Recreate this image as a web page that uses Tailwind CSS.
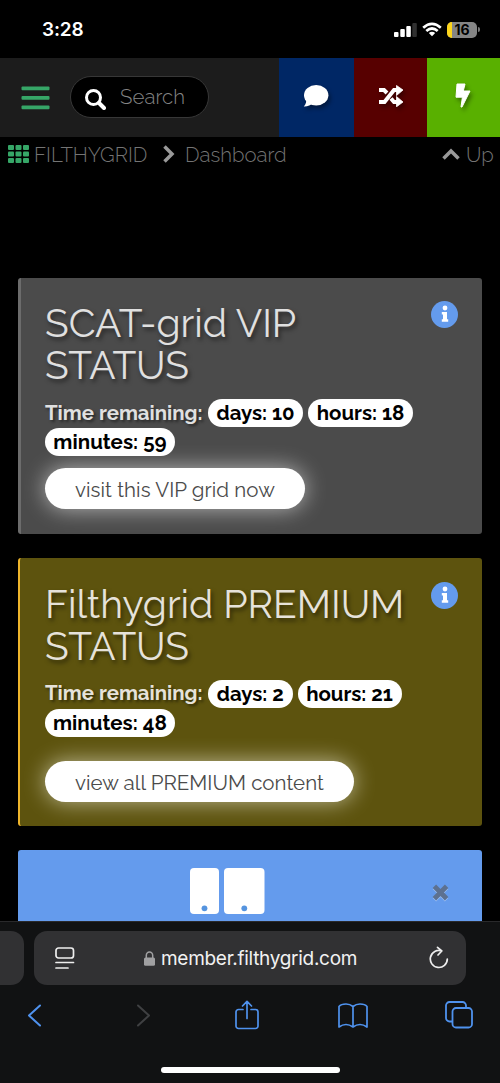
<!DOCTYPE html>
<html lang="en">
<head>
<meta charset="utf-8">
<title>Dashboard</title>
<script src="https://cdn.jsdelivr.net/npm/@tailwindcss/browser@4"></script>
</head>
<body class="bg-black">
<div class="w-[500px] h-[1083px] overflow-hidden flex flex-col bg-black whitespace-nowrap font-['Raleway','Lato',sans-serif]">

  <!-- Status bar -->
  <div class="h-[58px] shrink-0 flex items-center justify-between pl-[42px] pr-[23px] pt-[3px]">
    <span class="font-['Inter',sans-serif] font-semibold text-[19px] tracking-[-0.2px] text-white">3:28</span>
    <div class="flex items-center -mt-[2px]">
      <svg class="w-[23px] h-[14px]" viewBox="0 0 23 14"><g fill="#fff"><rect x="0" y="9" width="4.5" height="5" rx="1"/><rect x="6.3" y="6" width="4.5" height="8" rx="1"/><rect x="12.3" y="3" width="4.5" height="11" rx="1"/></g><rect x="18.3" y="0" width="4.5" height="14" rx="1" fill="#303030"/></svg>
      <svg class="w-[20px] h-[15px] ml-[5px]" viewBox="0 0 20 15" fill="none" stroke="#fff" stroke-width="2.7"><path d="M1.2 5.7Q10-2 18.8 5.7"/><path d="M4.3 9Q10 4 15.7 9"/><path d="M10 14.3 6.8 11.1Q10 8.6 13.2 11.1Z" fill="#fff" stroke="none"/></svg>
      <div class="relative ml-[5px] w-[30px] h-[16px] rounded-[5px] bg-[#858585] overflow-hidden flex items-center justify-center">
        <div class="absolute left-0 top-0 w-[5px] h-full bg-[#fdd51b]"></div>
        <span class="font-['Inter',sans-serif] font-bold text-[14px] leading-none text-black relative">16</span>
      </div>
      <div class="w-[2px] h-[5px] rounded-r-full bg-[#777] ml-[1px] -mr-[3px]"></div>
    </div>
  </div>

  <!-- Header -->
  <div class="h-[78.5px] shrink-0 flex bg-[#1c1c1c]">
    <div class="w-[279px] flex items-center pl-[21px]">
      <svg class="w-[29px] h-[24px] mt-[1px]" viewBox="0 0 29 24" fill="#36a667"><rect x=".5" y=".5" width="28" height="3.7" rx="1"/><rect x=".5" y="10" width="28" height="3.7" rx="1"/><rect x=".5" y="19.5" width="28" height="3.7" rx="1"/></svg>
      <div class="ml-[20px] w-[139px] h-[42px] rounded-full bg-black border border-[#373737] flex items-center pl-[14px]">
        <svg class="w-[21px] h-[21px] mt-[4px]" viewBox="0 0 21 21" fill="none" stroke="#fff"><circle cx="8.5" cy="8.5" r="7" stroke-width="3"/><path d="m14 14 5 5" stroke-width="4" stroke-linecap="round"/></svg>
        <span class="ml-[14px] pt-[1px] text-[20.4px] tracking-[0.1px] text-[#858585] font-light">Search</span>
      </div>
    </div>
    <div class="w-[75px] bg-[#002765] flex items-center justify-center pb-[3px] pr-[1px]">
      <svg class="w-[26px] h-[24px] drop-shadow-[2px_3px_2px_rgba(0,0,0,0.4)]" viewBox="0 0 26 24" fill="#fff"><ellipse cx="13.2" cy="11.2" rx="12.2" ry="10.2"/><path d="M3 15Q4 19 .8 22.4 6.5 22.6 10 19Z"/></svg>
    </div>
    <div class="w-[73px] bg-[#570000] flex items-center justify-center pb-[3px]">
      <svg class="w-[26px] h-[22px] drop-shadow-[2px_3px_2px_rgba(0,0,0,0.4)]" viewBox="0 0 26 22" fill="none" stroke="#fff" stroke-width="4"><path d="M1 5H6L9 8M13 13.5 16 17H20M1 17H6.5L16 5H20"/><path d="M18.5.5 25 5 18.5 10.5ZM18.5 11.5 25 17 18.5 21.8Z" fill="#fff" stroke="#fff" stroke-width=".8" stroke-linejoin="round"/></svg>
    </div>
    <div class="w-[73px] bg-[#59b000] flex items-center justify-center pb-[3px] pr-[1px]">
      <svg class="w-[16px] h-[25px] drop-shadow-[2px_3px_2px_rgba(0,0,0,0.4)]" viewBox="0 0 16 25" fill="#fff" stroke="#fff" stroke-linejoin="round"><path d="M2 1H10L8.3 8H15L7 24H6L7.4 14.2H1Z"/></svg>
    </div>
  </div>

  <!-- Breadcrumb -->
  <div class="h-[36px] shrink-0 flex items-center pl-[8px] pr-[7px] text-[20.4px] font-light text-[#747474]">
    <svg class="w-[21px] h-[18px] -mt-[1px]" viewBox="0 0 21 18" fill="#36a667"><rect x="0" y="0" width="6" height="5" rx="1"/><rect x="7.5" y="0" width="6" height="5" rx="1"/><rect x="15" y="0" width="6" height="5" rx="1"/><rect x="0" y="6.5" width="6" height="5" rx="1"/><rect x="7.5" y="6.5" width="6" height="5" rx="1"/><rect x="15" y="6.5" width="6" height="5" rx="1"/><rect x="0" y="13" width="6" height="5" rx="1"/><rect x="7.5" y="13" width="6" height="5" rx="1"/><rect x="15" y="13" width="6" height="5" rx="1"/></svg>
    <span class="ml-[5px] w-[128px] pt-[2px]">FILTHYGRID</span>
    <svg class="w-[14px] h-[20px] -mt-[1px]" viewBox="0 0 14 20" fill="none" stroke="#999" stroke-width="3.5"><path d="m2.5 2.5 7.5 7.5-7.5 7.5"/></svg>
    <span class="ml-[9px] pt-[2px]">Dashboard</span>
    <svg class="ml-auto w-[18px] h-[14px] -mt-[1px]" viewBox="0 0 18 14" fill="none" stroke="#999" stroke-width="3.5"><path d="m1.5 11.5 7.5-7.5 7.5 7.5"/></svg>
    <span class="ml-[6px] w-[27px] pt-[2px]">Up</span>
  </div>

  <!-- Cards -->
  <div class="h-[748.5px] shrink-0 pt-[105px] px-[18px] overflow-hidden">
    <section class="h-[256px] bg-[#4b4b4b] rounded-[3px] border-l-[3px] border-[#6c6c6c] pl-[24px] pr-[24px] pt-[24px] text-[#e0e0e0]">
      <div class="flex justify-between">
        <h2 class="pt-[0.5px] text-[39px] leading-[42px] font-normal [text-shadow:2px_3px_4px_rgba(0,0,0,0.5)]">SCAT-grid VIP<br><span class="tracking-[-0.3px]">STATUS</span></h2>
        <svg class="w-[27px] h-[27px] -mt-[0.5px]" viewBox="0 0 27 27"><circle cx="13.5" cy="13.5" r="13.5" fill="#649bed"/><circle cx="14" cy="7" r="2.4" fill="#fff"/><path d="M10.800 11h5.200v7.200h1.200v2.600h-6.400v-2.600h1.200v-4.600h-1.200z" fill="#fff"/></svg>
      </div>
      <div class="mt-[13px] flex items-center gap-[5px] h-[28px] text-[20.4px] font-bold">
        <span class="w-[158px] leading-[29px] [text-shadow:2px_2px_3px_rgba(0,0,0,0.5)]">Time remaining:</span>
        <span class="w-[95px] h-[28px] leading-[28px] rounded-full bg-white text-black text-center">days: 10</span>
        <span class="w-[105px] h-[28px] leading-[28px] rounded-full bg-white text-black text-center">hours: 18</span>
      </div>
      <div class="mt-[1px] w-[130px] h-[28px] leading-[28px] rounded-full bg-white text-black text-center text-[20.5px] tracking-[0.05px] font-bold">minutes: 59</div>
      <div class="mt-[12px] w-[260px] h-[41px] leading-[44px] rounded-full bg-white text-[#4b4b4b] text-center text-[20.5px] tracking-[0.05px] shadow-[0_0_22px_rgba(255,255,255,0.6)]">visit this VIP grid now</div>
    </section>

    <section class="mt-[24.5px] h-[268px] bg-[#5d530e] rounded-[3px] border-l-[2px] border-[#efb52b] pl-[25px] pr-[24px] pt-[24px] text-[#e6e2da]">
      <div class="flex justify-between">
        <h2 class="pt-[0.5px] text-[39px] leading-[42px] font-normal [text-shadow:2px_3px_4px_rgba(0,0,0,0.5)]">Filthygrid PREMIUM<br><span class="tracking-[-0.3px]">STATUS</span></h2>
        <svg class="w-[27px] h-[27px] -mt-[0.5px]" viewBox="0 0 27 27"><circle cx="13.5" cy="13.5" r="13.5" fill="#649bed"/><circle cx="14" cy="7" r="2.4" fill="#fff"/><path d="M10.800 11h5.200v7.200h1.200v2.600h-6.400v-2.600h1.200v-4.600h-1.200z" fill="#fff"/></svg>
      </div>
      <div class="mt-[13px] flex items-center gap-[5px] h-[28px] text-[20.4px] font-bold">
        <span class="w-[158px] leading-[29px] [text-shadow:2px_2px_3px_rgba(0,0,0,0.5)]">Time remaining:</span>
        <span class="w-[84.5px] h-[28px] leading-[28px] rounded-full bg-white text-black text-center">days: 2</span>
        <span class="w-[104px] h-[28px] leading-[28px] rounded-full bg-white text-black text-center">hours: 21</span>
      </div>
      <div class="mt-[1px] w-[130px] h-[28px] leading-[28px] rounded-full bg-white text-black text-center text-[20.5px] tracking-[0.05px] font-bold">minutes: 48</div>
      <div class="mt-[24px] w-[309px] h-[41px] leading-[44px] rounded-full bg-white text-[#4b4b4b] text-center text-[20.5px] tracking-[0.02px] shadow-[0_0_22px_rgba(255,255,240,0.6)]">view all PREMIUM content</div>
    </section>

    <section class="mt-[24px] h-[100px] bg-[#649bed] rounded-[3px] flex items-start pl-[172px]">
      <svg class="w-[75px] h-[46px] mt-[18px]" viewBox="0 0 75 46"><g fill="#fff"><rect width="29" height="46" rx="4"/><rect x="34" width="40.5" height="46" rx="4"/></g><g fill="#5594df"><circle cx="14.5" cy="40.3" r="2.9"/><circle cx="54.3" cy="40.3" r="2.9"/></g></svg>
      <svg class="ml-[167px] mt-[34px] w-[17px] h-[17px] drop-shadow-[0_1px_0_rgba(255,255,255,0.35)]" viewBox="0 0 18 18" stroke="#5d7190" stroke-width="5.2"><path d="m2.5 2.5 13 13M15.5 2.5l-13 13"/></svg>
    </section>
  </div>

  <!-- Browser toolbar -->
  <div class="h-[162px] shrink-0 bg-[#111213] border-t border-[#29292b] pt-[9px] flex flex-col items-center">
    <div class="w-full h-[54px] flex">
      <div class="w-[24px] bg-[#313133] rounded-r-[13px]"></div>
      <div class="ml-[10px] w-[432px] bg-[#313133] rounded-[13px] flex items-center pl-[21px] pr-[17px]">
        <svg class="w-[20px] h-[22px]" viewBox="0 0 20 22" fill="none" stroke="#eee" stroke-width="1.7" stroke-linecap="round"><rect x="1" y="1" width="17.5" height="10" rx="2.5"/><path d="M1 15.5h17.5M1 21h12"/></svg>
        <svg class="ml-[69px] w-[11px] h-[15px]" viewBox="0 0 11 15"><path d="M2.3 7V4.5a3.2 3.5 0 0 1 6.4 0V7" fill="none" stroke="#a0a0a2" stroke-width="1.5"/><rect y="6.5" width="11" height="8.3" rx="1.5" fill="#a0a0a2"/></svg>
        <span class="ml-[6px] pt-[2px] font-['Inter',sans-serif] text-[19px] text-[#f2f2f2] tracking-[-0.29px]">member.filthygrid.com</span>
        <svg class="ml-auto w-[20px] h-[23px] -mt-[2px]" viewBox="0 0 20 23" fill="none" stroke="#eee" stroke-width="1.7" stroke-linecap="round" stroke-linejoin="round"><path d="M12.7 5A8.5 8.5 0 1 0 18.3 13M8.5 1.3 12.8 5 9 9"/></svg>
      </div>
    </div>
    <div class="w-full h-[60px] flex items-center pl-[27px]">
      <svg class="w-[15px] h-[23px]" viewBox="0 0 15 23" fill="none" stroke="#4f92ee" stroke-width="2" stroke-linecap="round" stroke-linejoin="round"><path d="M13 1.5 2 11.5l11 10"/></svg>
      <svg class="w-[15px] h-[23px] ml-[94px]" viewBox="0 0 15 23" fill="none" stroke="#3f4042" stroke-width="2" stroke-linecap="round" stroke-linejoin="round"><path d="m2 1.5 11 10-11 10"/></svg>
      <svg class="w-[24px] h-[30px] ml-[84px]" viewBox="0 0 24 30" fill="none" stroke="#4f92ee" stroke-width="1.7" stroke-linecap="round" stroke-linejoin="round"><path d="M8 9.5H3.5A2.5 2.5 0 0 0 1 12v14a2.5 2.5 0 0 0 2.5 2.5h17A2.5 2.5 0 0 0 23 26V12a2.5 2.5 0 0 0-2.5-2.5H16M12 18.5V1.5M7.5 6 12 1.3 16.5 6"/></svg>
      <svg class="w-[30px] h-[25px] ml-[79px]" viewBox="0 0 30 25" fill="none" stroke="#4f92ee" stroke-width="1.7" stroke-linejoin="round"><path d="M15 3.5Q12 1 8 1 3 1 1 3.5V24Q8 19 15 24 22 19 29 24V3.5Q27 1 22 1 18 1 15 3.5V24"/></svg>
      <svg class="w-[28px] h-[28px] ml-[77px]" viewBox="0 0 28 28" fill="none" stroke="#4f92ee" stroke-width="1.8"><rect x="7.5" y="7" width="19.5" height="19.5" rx="3.5"/><path d="M7.500 20.500H4.500A3.500 3.500 0 0 1 1 17V4.500A3.500 3.500 0 0 1 4.500 1H17.500A3.500 3.500 0 0 1 21 4.500V7"/></svg>
    </div>
    <div class="mt-[22px] w-[179px] h-[6px] rounded-full bg-white"></div>
  </div>
</div>
</body>
</html>
